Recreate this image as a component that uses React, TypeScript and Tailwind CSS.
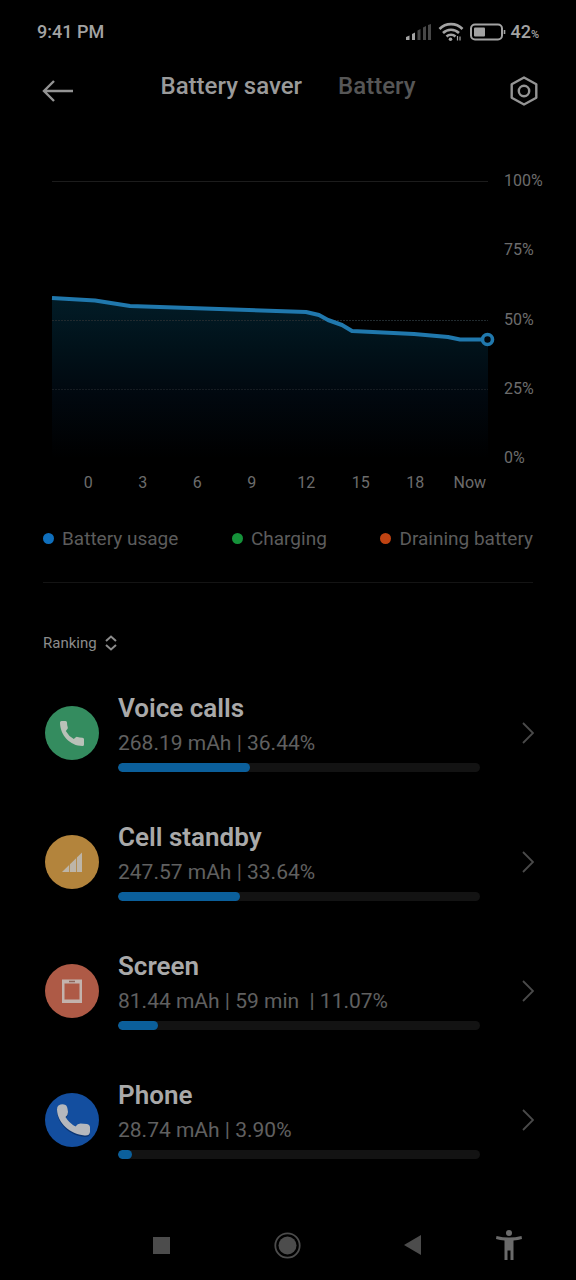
import type { ReactNode } from 'react';

interface UsageItem {
  name: string;
  detail: string;
  percent: number;
  icon: ReactNode;
}

const levels = ['100%', '75%', '50%', '25%', '0%'];
const hours = ['0', '3', '6', '9', '12', '15', '18', 'Now'];

const legend = [
  { label: 'Battery usage', dot: 'bg-[#0f6fbd]' },
  { label: 'Charging', dot: 'bg-[#15923a]' },
  { label: 'Draining battery', dot: 'bg-[#c04312]' },
];

const usage: UsageItem[] = [
  { name: 'Voice calls', detail: '268.19 mAh | 36.44%', percent: 36.44, icon: <VoiceCallsIcon /> },
  { name: 'Cell standby', detail: '247.57 mAh | 33.64%', percent: 33.64, icon: <CellStandbyIcon /> },
  { name: 'Screen', detail: '81.44 mAh | 59 min  | 11.07%', percent: 11.07, icon: <ScreenIcon /> },
  { name: 'Phone', detail: '28.74 mAh | 3.90%', percent: 3.9, icon: <PhoneIcon /> },
];

function VoiceCallsIcon() {
  return (
    <svg width="54" height="54" viewBox="0 0 54 54" aria-hidden="true">
      <circle cx="27" cy="27" r="27" fill="#348c5f" />
      <path
        d="M16.500 15H20.500Q22 15 22 16.500Q22 19.500 22.800 21.500Q23 22.500 22.200 23.300L20.800 25Q23.500 30 28.800 33L30.800 31.300Q31.500 30.600 32.500 31Q34.500 31.800 37.500 31.800Q39 31.800 39 33.300V38.500Q39 40 37.500 40C25 40 15 29 15 16.500Q15 15 16.500 15Z"
        fill="#b9c1b8"
      />
    </svg>
  );
}

function CellStandbyIcon() {
  return (
    <svg width="54" height="54" viewBox="0 0 54 54" aria-hidden="true">
      <circle cx="27" cy="27" r="27" fill="#b3843c" />
      <path d="M17 37L37 17.500V37Z" fill="#bdb5a8" />
      <path d="M24.500 28V37M31.500 21V37" stroke="#b3843c" strokeWidth="0.800" />
    </svg>
  );
}

function ScreenIcon() {
  return (
    <svg width="54" height="54" viewBox="0 0 54 54" aria-hidden="true">
      <circle cx="27" cy="27" r="27" fill="#ae5a46" />
      <path fillRule="evenodd" d="M17 15.500H37V39H17ZM19.500 19.500V35.500H34.500V19.500Z" fill="#c3b3ad" />
      <path d="M24 17.500H30" stroke="#8d6458" strokeWidth="1.500" />
    </svg>
  );
}

function PhoneIcon() {
  return (
    <svg width="54" height="54" viewBox="0 0 54 54" aria-hidden="true">
      <circle cx="27" cy="27" r="27" fill="#134e9f" />
      <path
        d="M13.500 12.500Q17 10.500 20.500 12Q22.500 13 23 19Q23.200 21.500 20.500 24Q24 30 30.500 33.500Q32.500 30.500 35.500 30.500L42 31Q45 31.500 45 34.500V39Q44.500 43 39.500 42.500C25 41 12.500 30 12 16.500Q12 13.500 13.500 12.500Z"
        transform="translate(0 1.500)"
        fill="#0c3674"
      />
      <path
        d="M13.500 12.500Q17 10.500 20.500 12Q22.500 13 23 19Q23.200 21.500 20.500 24Q24 30 30.500 33.500Q32.500 30.500 35.500 30.500L42 31Q45 31.500 45 34.500V39Q44.500 43 39.500 42.500C25 41 12.500 30 12 16.500Q12 13.500 13.500 12.500Z"
        fill="#b5b8bd"
      />
    </svg>
  );
}

function StatusBar() {
  return (
    <div className="flex h-16 items-center justify-between px-[37px] text-lg font-medium text-[#a3a3a3]">
      <span>9:41 PM</span>
      <div className="flex items-center">
        <svg width="26" height="18" viewBox="0 0 26 18" aria-hidden="true">
          <path d="M0 14L3.500 12.500V17H0ZM6 11L9 9.500V17H6Z" fill="#a3a3a3" />
          <path d="M11.500 7.500L14.500 6V17H11.500ZM17 4.500L20 3V17H17ZM22 2L25 1V17H22Z" fill="#474747" />
        </svg>
        <svg className="ml-1.5" width="26" height="20" viewBox="0 0 26 20" fill="none" stroke="#a3a3a3" strokeWidth="2.600" aria-hidden="true">
          <path d="M1.500 7A16 16 0 0 1 24.500 7" />
          <path d="M5 11A11.500 11.500 0 0 1 21 11" />
          <path d="M8.500 14.500A6.500 6.500 0 0 1 17.500 14.500" />
          <circle cx="12.500" cy="17.300" r="1.800" fill="#a3a3a3" stroke="none" />
          <path d="M19.500 14V18.500M22 14.500V18.500" strokeWidth="1.200" />
        </svg>
        <svg className="ml-1.5" width="36" height="18" viewBox="0 0 36 18" aria-hidden="true">
          <rect x="1" y="1.500" width="31" height="15" rx="4" fill="none" stroke="#a3a3a3" strokeWidth="2" />
          <rect x="4" y="4.500" width="11" height="9" rx="1" fill="#a3a3a3" />
          <path d="M34.500 7V11" stroke="#a3a3a3" strokeWidth="1.600" />
        </svg>
        <span className="ml-1">
          42<span className="text-[11px]">%</span>
        </span>
      </div>
    </div>
  );
}

function Header() {
  return (
    <header className="flex h-[54px] items-center pl-[42px] pr-[38px]">
      <button type="button" aria-label="Back">
        <svg width="32" height="22" viewBox="0 0 32 22" fill="none" stroke="#949494" strokeWidth="2.400" aria-hidden="true">
          <path d="M31 11H2M12 1L2 11L12 21" />
        </svg>
      </button>
      <nav className="flex flex-1 justify-center gap-9 pr-2 pb-2.5 text-2xl leading-7 font-medium">
        <button type="button" className="text-[#9a9a9a]">
          Battery saver
        </button>
        <button type="button" className="text-[#565656]">
          Battery
        </button>
      </nav>
      <button type="button" aria-label="Settings">
        <svg width="28" height="30" viewBox="0 0 28 30" fill="none" stroke="#949494" strokeWidth="2.400" strokeLinejoin="round" aria-hidden="true">
          <path d="M14 1.500L26.300 8.200V21.800L14 28.500L1.700 21.800V8.200Z" />
          <circle cx="14" cy="15" r="5.200" />
        </svg>
      </button>
    </header>
  );
}

function BatteryChart() {
  return (
    <section className="mt-[53px] text-base leading-5 text-[#6c6c6c]">
      <div className="flex">
        <div className="min-w-0 flex-1 py-2.5 pl-[52px]">
          <svg className="w-full overflow-visible" viewBox="0 0 436 277" fill="none" role="img" aria-label="Battery level">
            <defs>
              <linearGradient id="area" x1="0" y1="117" x2="0" y2="277" gradientUnits="userSpaceOnUse">
                <stop offset="0" stopColor="#021c27" />
                <stop offset="0.300" stopColor="#01121a" />
                <stop offset="0.600" stopColor="#01080f" />
                <stop offset="1" stopColor="#000000" />
              </linearGradient>
            </defs>
            <path
              d="M0 117L43 119.500L78 125L254 131L267 134L276 139L290 144L300 150L362 153L396 156L408 158.500H436V277H0Z"
              fill="url(#area)"
            />
            <path d="M0 0.500H436" stroke="#1c1c1c" />
            <path d="M0 139.500H436" stroke="#212a2e" strokeDasharray="2 1" />
            <path d="M0 208.500H436" stroke="#161c22" strokeDasharray="2 1" />
            <path
              d="M0 117L43 119.500L78 125L254 131L267 134L276 139L290 144L300 150L362 153L396 156L408 158.500H430"
              stroke="#2078ad"
              strokeWidth="4"
              strokeLinejoin="round"
            />
            <circle cx="435.500" cy="158.500" r="5" fill="#00060a" stroke="#2078ad" strokeWidth="3.600" />
          </svg>
        </div>
        <div className="flex w-[88px] flex-col justify-between pl-4">
          {levels.map((level) => (
            <span key={level}>{level}</span>
          ))}
        </div>
      </div>
      <div className="mt-[5px] grid grid-cols-8 pl-[61px] pr-[79px] text-center">
        {hours.map((hour) => (
          <span key={hour}>{hour}</span>
        ))}
      </div>
    </section>
  );
}

function UsageRow({ item }: { item: UsageItem }) {
  return (
    <li>
      <a href="#" className="flex h-[129px] items-center pl-[45px] pr-[42px]">
        {item.icon}
        <div className="ml-[19px] min-w-0 flex-1">
          <h2 className="text-[26px] leading-8 font-semibold text-[#a9a9a9]">{item.name}</h2>
          <p className="mt-[5px] text-[21px] leading-7 whitespace-pre text-[#606060]">{item.detail}</p>
          <div className="mt-1.5 mb-px h-[9px] overflow-hidden rounded-full bg-[#131313]">
            <div className="h-full rounded-full bg-[#0b5f9b]" style={{ width: `${item.percent}%` }} />
          </div>
        </div>
        <svg className="ml-[42px]" width="12" height="22" viewBox="0 0 12 22" fill="none" stroke="#4a4a4a" strokeWidth="1.800" aria-hidden="true">
          <path d="M1 1L11 11L1 21" />
        </svg>
      </a>
    </li>
  );
}

function NavigationBar() {
  return (
    <footer className="mt-auto flex h-[70px] items-center pl-[98px] pr-[34px]">
      <button type="button" aria-label="Recent apps" className="flex flex-1 justify-center">
        <span className="size-[17px] bg-[#4c4c4c]" />
      </button>
      <button type="button" aria-label="Home" className="flex flex-1 justify-center">
        <svg width="28" height="28" viewBox="0 0 28 28" aria-hidden="true">
          <circle cx="14.500" cy="14.500" r="12.200" fill="none" stroke="#4c4c4c" strokeWidth="1.800" />
          <circle cx="14.500" cy="14.500" r="9" fill="#4c4c4c" />
        </svg>
      </button>
      <button type="button" aria-label="Back" className="flex flex-1 justify-center">
        <svg width="18" height="20" viewBox="0 0 18 20" aria-hidden="true">
          <path d="M17 0V20L0 10Z" fill="#4c4c4c" />
        </svg>
      </button>
      <button type="button" aria-label="Accessibility" className="flex w-[66px] justify-center">
        <svg width="26" height="30" viewBox="0 0 26 30" fill="#6b6b6b" aria-hidden="true">
          <circle cx="13" cy="3" r="3" />
          <path d="M0.500 6Q13 9 25.500 6L26 9Q22 10 17.500 10.500V30H14.500V20.500H11.500V30H8.500V10.500Q4 10 0 9Z" />
        </svg>
      </button>
    </footer>
  );
}

export default function App() {
  return (
    <div className="flex min-h-screen flex-col bg-black font-[Roboto,sans-serif]">
      <StatusBar />
      <Header />
      <main>
        <BatteryChart />
        <ul className="mx-[43px] mt-[34px] flex justify-between text-[19px] leading-6 text-[#5c5c5c]">
          {legend.map((entry) => (
            <li key={entry.label} className="flex items-center gap-2">
              <span className={`mb-0.5 size-[11px] rounded-full ${entry.dot}`} />
              {entry.label}
            </li>
          ))}
        </ul>
        <hr className="mx-[43px] mt-[31px] border-[#141414]" />
        <button type="button" className="mt-[50px] ml-[43px] flex items-center gap-2 text-[15px] leading-5 text-[#8c8c8c]">
          Ranking
          <svg width="12" height="16" viewBox="0 0 12 16" fill="none" stroke="#8c8c8c" strokeWidth="2" aria-hidden="true">
            <path d="M1 6L6 1.500L11 6M1 10L6 14.500L11 10" />
          </svg>
        </button>
        <ul className="mt-[15px]">
          {usage.map((item) => (
            <UsageRow key={item.name} item={item} />
          ))}
        </ul>
      </main>
      <NavigationBar />
    </div>
  );
}
